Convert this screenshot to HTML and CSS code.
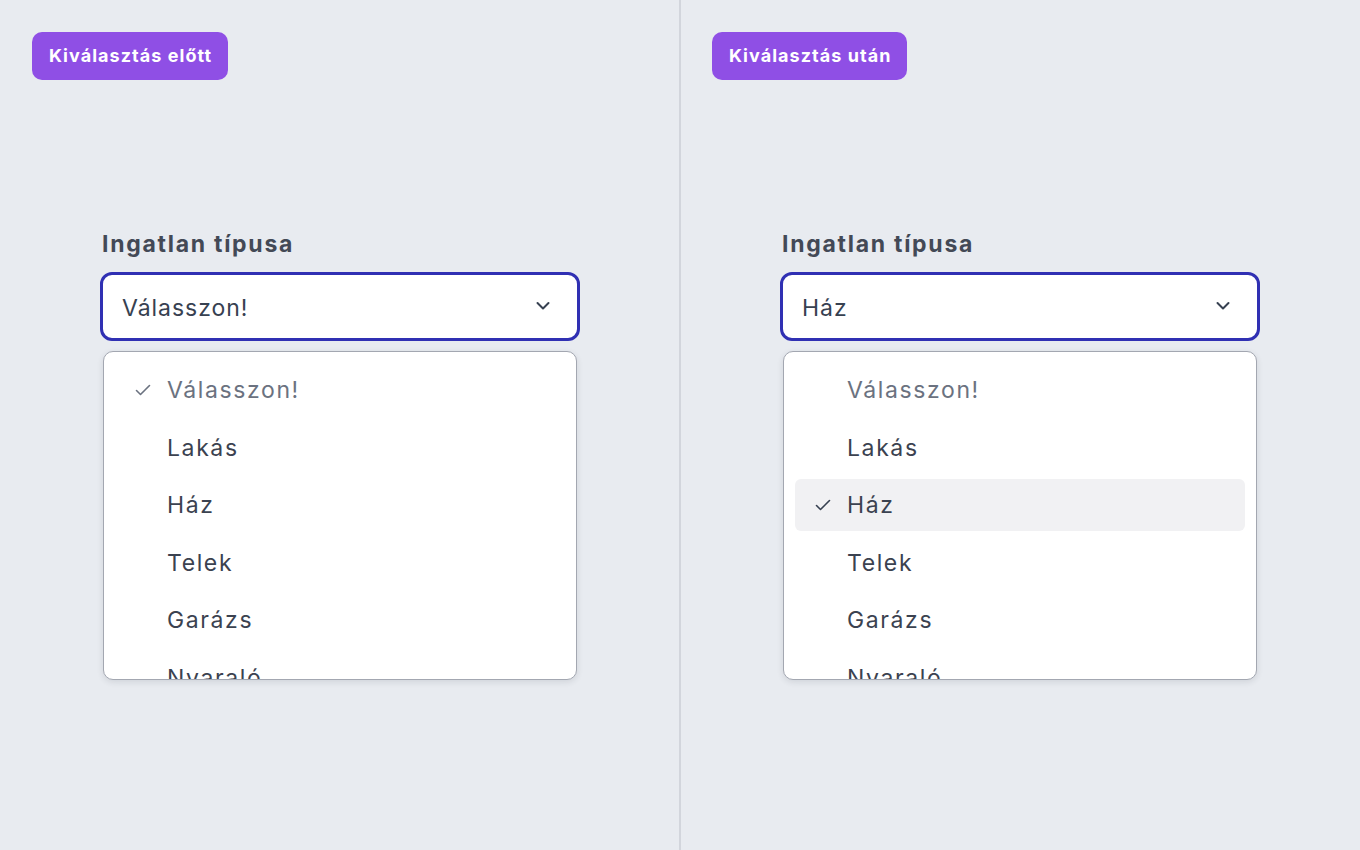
FILE: index.html
```html
<!DOCTYPE html>
<html lang="hu">
<head>
<meta charset="utf-8">
<link rel="stylesheet" href="styles.css">
</head>
<body>
<div class="page">
  <section class="panel">
    <span class="badge">Kiválasztás előtt</span>
    <div class="field">
      <div class="label">Ingatlan típusa</div>
      <div class="select">
        <span class="value">Válasszon!</span>
        <svg class="chev" width="20" height="20" viewBox="0 0 20 20"><path d="M4.5 7l5.5 5.5 5.5-5.5" fill="none" stroke="#374151" stroke-width="2" stroke-linecap="round" stroke-linejoin="round"/></svg>
      </div>
      <div class="list">
        <div class="item placeholder"><svg class="check" width="18" height="18" viewBox="0 0 18 18"><path d="M2.5 9.5l4 4 9-9" fill="none" stroke="#6b7280" stroke-width="1.6" stroke-linecap="round" stroke-linejoin="round"/></svg><span>Válasszon!</span></div>
        <div class="item"><span>Lakás</span></div>
        <div class="item"><span>Ház</span></div>
        <div class="item"><span>Telek</span></div>
        <div class="item"><span>Garázs</span></div>
        <div class="item"><span>Nyaraló</span></div>
      </div>
    </div>
  </section>
  <div class="divider"></div>
  <section class="panel right">
    <span class="badge">Kiválasztás után</span>
    <div class="field">
      <div class="label">Ingatlan típusa</div>
      <div class="select">
        <span class="value">Ház</span>
        <svg class="chev" width="20" height="20" viewBox="0 0 20 20"><path d="M4.5 7l5.5 5.5 5.5-5.5" fill="none" stroke="#374151" stroke-width="2" stroke-linecap="round" stroke-linejoin="round"/></svg>
      </div>
      <div class="list">
        <div class="item placeholder"><span>Válasszon!</span></div>
        <div class="item"><span>Lakás</span></div>
        <div class="item selected"><svg class="check" width="18" height="18" viewBox="0 0 18 18"><path d="M2.5 9.5l4 4 9-9" fill="none" stroke="#374151" stroke-width="1.6" stroke-linecap="round" stroke-linejoin="round"/></svg><span>Ház</span></div>
        <div class="item"><span>Telek</span></div>
        <div class="item"><span>Garázs</span></div>
        <div class="item"><span>Nyaraló</span></div>
      </div>
    </div>
  </section>
</div>
</body>
</html>
```
FILE: styles.css
```css
* { box-sizing: border-box; }
html, body { margin: 0; padding: 0; }
body {
  background: #e8ebf0;
  font-family: Inter, "Noto Sans", sans-serif;
  color: #374151;
  letter-spacing: 0.06em;
}
.page {
  display: flex;
  height: 850px;
}
.panel {
  width: 679px;
  padding: 32px 0 0 32px;
  display: flex;
  flex-direction: column;
  align-items: flex-start;
}
.panel.right {
  flex: 1;
  padding-left: 31px;
}
.divider {
  width: 2px;
  background: #d2d5dc;
}
.badge {
  display: inline-block;
  height: 48px;
  line-height: 48px;
  padding: 0 16px 0 17px;
  border-radius: 10px;
  background: #8f4fe5;
  color: #fff;
  font-weight: 700;
  font-size: 18px;
  letter-spacing: 0.058em;
}
.field {
  margin: 150px 0 0 68px;
  width: 480px;
}
.label {
  font-size: 23px;
  font-weight: 700;
  color: #434956;
  line-height: 28px;
  padding-left: 2px;
  letter-spacing: 0.075em;
}
.select {
  margin-top: 14px;
  height: 69px;
  border: 3px solid #3030b3;
  border-radius: 12px;
  background: #fff;
  display: flex;
  align-items: center;
  justify-content: space-between;
  padding: 0 24px 0 19px;
  font-size: 23px;
}
.value { margin-top: 2px; }
.chev { margin-top: -1px; }
.list {
  margin: 10px 3px 0 3px;
  height: 329px;
  overflow: hidden;
  border: 1px solid #a3a7b1;
  border-radius: 10px;
  background: #fff;
  box-shadow: 0 2px 6px rgba(30, 40, 60, 0.12);
  padding: 12px 11px 0 11px;
}
.item {
  height: 52px;
  margin-bottom: 5.5px;
  border-radius: 6px;
  display: flex;
  align-items: center;
  padding-left: 52px;
  position: relative;
  font-size: 23px;
  letter-spacing: 0.07em;
  color: #3b4250;
}
.item.placeholder { color: #6b7280; }
.item.selected { background: #f1f1f3; }
.check {
  position: absolute;
  left: 19px;
  top: 17px;
}
```
